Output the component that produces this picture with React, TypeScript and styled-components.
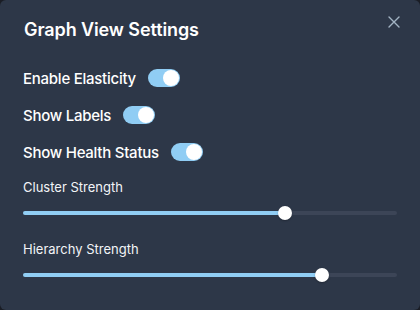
import { useState } from 'react';
import styled, { createGlobalStyle } from 'styled-components';

const GlobalStyle = createGlobalStyle`
  * { box-sizing: border-box; }
  html, body {
    margin: 0;
    padding: 0;
    background: #1a1d25;
    font-family: Inter, "Noto Sans", "Liberation Sans", sans-serif;
  }
`;

const Panel = styled.div`
  width: 420px;
  height: 310px;
  background: #2d3748;
  border-radius: 6px;
  color: #ffffff;
  position: relative;
  display: flex;
  flex-direction: column;
`;

const Header = styled.header`
  padding: 16px 24px;
  font-size: 18px;
  line-height: 28px;
  font-weight: 600;
  letter-spacing: -0.1px;
`;

const CloseButton = styled.button`
  position: absolute;
  top: 6px;
  right: 10px;
  width: 32px;
  height: 32px;
  border: none;
  background: transparent;
  display: flex;
  align-items: center;
  justify-content: center;
  padding: 0;
  color: #a3b4c4;
  cursor: pointer;
`;

const Body = styled.div`
  padding: 6px 23px 0 23px;
  display: flex;
  flex-direction: column;
`;

const ToggleList = styled.div`
  display: flex;
  flex-direction: column;
  gap: 13px;
`;

const ToggleRow = styled.label`
  display: flex;
  align-items: center;
  height: 24px;
  font-size: 15px;
  font-weight: 500;
  letter-spacing: -0.25px;
  gap: 12px;
`;

const Track = styled.span<{ $on: boolean }>`
  display: inline-flex;
  align-items: center;
  justify-content: ${({ $on }) => ($on ? 'flex-end' : 'flex-start')};
  width: 32px;
  height: 18px;
  padding: 1px;
  border-radius: 9px;
  background: ${({ $on }) => ($on ? '#90cdf4' : '#4a5568')};
  cursor: pointer;
`;

const Thumb = styled.span`
  width: 16px;
  height: 16px;
  border-radius: 50%;
  background: #ffffff;
`;

const SliderList = styled.div`
  margin-top: 13px;
  display: flex;
  flex-direction: column;
  gap: 18px;
`;

const SliderField = styled.div`
  display: flex;
  flex-direction: column;
  gap: 8px;
`;

const SliderLabel = styled.div`
  font-size: 13px;
  line-height: 20px;
  color: #f2f4f7;
`;

const SliderRoot = styled.div`
  position: relative;
  height: 16px;
  display: flex;
  align-items: center;
`;

const SliderTrack = styled.div`
  width: 100%;
  height: 4px;
  border-radius: 2px;
  background: #3c4557;
`;

const SliderFill = styled.div`
  height: 100%;
  border-radius: 2px;
  background: #90cdf4;
`;

const SliderThumb = styled.div`
  position: absolute;
  top: 1px;
  width: 14px;
  height: 14px;
  margin-left: -7px;
  border-radius: 50%;
  background: #ffffff;
  box-shadow: 0 1px 2px rgba(0, 0, 0, 0.25);
`;

const Toggle = ({ label }: { label: string }) => {
  const [on, setOn] = useState(true);
  return (
    <ToggleRow>
      {label}
      <Track $on={on} onClick={() => setOn(!on)}>
        <Thumb />
      </Track>
    </ToggleRow>
  );
};

const Slider = ({ label, value }: { label: string; value: number }) => (
  <SliderField>
    <SliderLabel>{label}</SliderLabel>
    <SliderRoot>
      <SliderTrack>
        <SliderFill style={{ width: `${value}%` }} />
      </SliderTrack>
      <SliderThumb style={{ left: `${value}%` }} />
    </SliderRoot>
  </SliderField>
);

const App = () => (
  <>
    <GlobalStyle />
    <Panel>
      <Header>Graph View Settings</Header>
      <CloseButton aria-label="Close">
        <svg width="12" height="12" viewBox="0 0 12 12">
          <path d="M1 1L11 11M11 1L1 11" stroke="currentColor" strokeWidth="1.4" strokeLinecap="round" />
        </svg>
      </CloseButton>
      <Body>
        <ToggleList>
          <Toggle label="Enable Elasticity" />
          <Toggle label="Show Labels" />
          <Toggle label="Show Health Status" />
        </ToggleList>
        <SliderList>
          <Slider label="Cluster Strength" value={70} />
          <Slider label="Hierarchy Strength" value={80} />
        </SliderList>
      </Body>
    </Panel>
  </>
);

export default App;
